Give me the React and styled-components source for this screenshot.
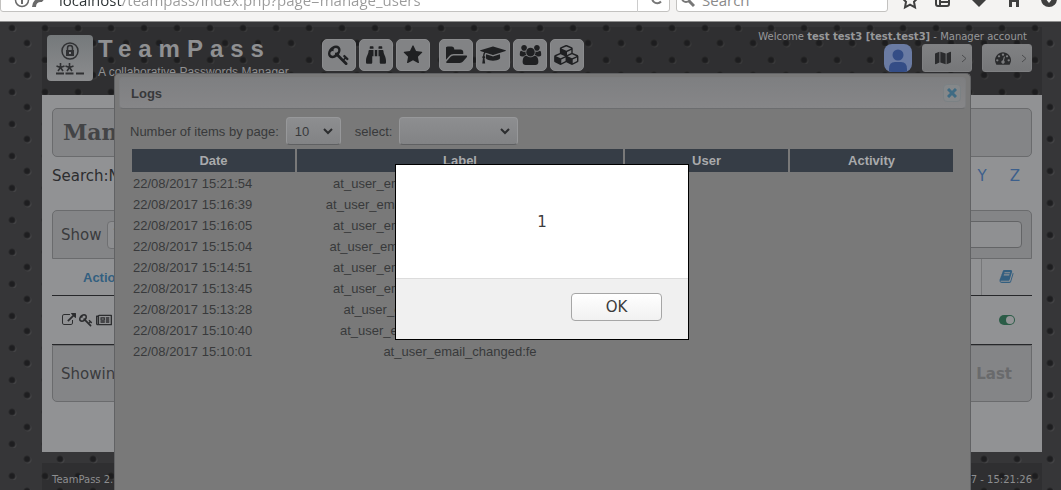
import React from "react";
import styled, { createGlobalStyle } from "styled-components";
import { FaBinoculars, FaMap, FaRegNewspaper } from "react-icons/fa";

const sans = `"Liberation Sans", Arial, sans-serif`;
const ui = `"DejaVu Sans", Verdana, sans-serif`;

const GlobalStyle = createGlobalStyle`
  *, *::before, *::after { box-sizing: border-box; }
  body {
    margin: 0;
    min-height: 100vh;
    overflow: hidden;
    background-color: #363638;
    background-image:
      radial-gradient(circle at 12px 28px, #1e1e20 2px, #29292b 3px, transparent 4px),
      radial-gradient(circle at 27px 11px, #1e1e20 2px, #29292b 3px, transparent 4px),
      radial-gradient(circle at 13px 29px, #434345 3px, transparent 4px),
      radial-gradient(circle at 28px 12px, #434345 3px, transparent 4px);
    background-size: 33px 32px;
    font-family: ${ui};
    font-size: 15px;
    color: #2c2d2f;
  }
  button, input, select { font: inherit; color: inherit; margin: 0; }
  a { text-decoration: none; color: inherit; }
`;

/* ---------- icons ---------- */

const Glyph = styled.svg`
  display: block;
  flex: none;
  fill: currentColor;
`;

const paths = {
  key: [1792, "M832 512q0-80-56-136t-136-56-136 56-56 136q0 42 19 83-41-19-83-19-80 0-136 56t-56 136 56 136 136 56 136-56 56-136q0-42-19-83 41 19 83 19 80 0 136-56t56-136zm851 704q0 17-49 66t-66 49q-9 0-28.5-16t-36.5-33-38.5-40-24.5-26l-96 96 220 220q28 28 28 68 0 42-39 81t-81 39q-40 0-68-28l-671-671q-176 131-365 131-163 0-265.5-102.5t-102.5-265.5q0-160 95-313t248-248 313-95q163 0 265.5 102.5t102.5 265.5q0 189-131 365l355 355 96-96q-3-3-26-24.5t-40-38.5-33-36.5-16-28.5q0-17 49-66t66-49q13 0 23 10 6 6 46 44.5t82 79.5 86.5 86 73 78 28.5 41z"],
  star: [1792, "M1728 647q0 22-26 48l-363 354 86 500q1 7 1 20 0 21-10.5 35.5t-30.5 14.5q-19 0-40-12l-449-236-449 236q-22 12-40 12-21 0-31.5-14.5t-10.5-35.5q0-6 2-20l86-500-364-354q-25-27-25-48 0-37 56-46l502-73 225-455q19-41 49-41t49 41l225 455 502 73q56 9 56 46z"],
  folder: [1792, "M1815 952q0 31-31 66l-336 396q-43 51-120.5 86.5t-143.5 35.5h-1088q-34 0-60.5-13t-26.5-43q0-31 31-66l336-396q43-51 120.5-86.5t143.5-35.5h1088q34 0 60.5 13t26.5 43zm-343-344v160h-832q-94 0-197 47.5t-164 119.5l-337 396-5 6q0-4-.5-12.5t-.5-12.5v-960q0-92 66-158t158-66h320q92 0 158 66t66 158v32h544q92 0 158 66t66 158z"],
  cap: [2304, "M1774 836l18 316q4 69-82 128t-235 93.5-323 34.5-323-34.5-235-93.5-82-128l18-316 574 181q22 7 48 7t48-7zm530-324q0 23-22 31l-1120 352q-4 1-10 1t-10-1l-652-206q-43 34-71 111.5t-34 178.5q63 36 63 109 0 69-58 107l58 433q2 14-8 25-9 11-24 11h-192q-15 0-24-11-10-11-8-25l58-433q-58-38-58-107 0-73 65-111 11-207 98-330l-333-104q-22-8-22-31t22-31l1120-352q4-1 10-1t10 1l1120 352q22 8 22 31z"],
  users: [2048, "M657 896q-162 5-265 128h-134q-82 0-138-40.5t-56-118.5q0-353 124-353 6 0 43.5 21t97.5 42.5 119 21.5q67 0 133-23-5 37-5 66 0 139 81 256zm1071 637q0 120-73 189.5t-194 69.5h-874q-121 0-194-69.5t-73-189.5q0-53 3.5-103.5t14-109 26.5-108.5 43-97.5 62-81 85.5-53.5 111.5-20q10 0 43 21.5t73 48 107 48 135 21.5 135-21.5 107-48 73-48 43-21.5q61 0 111.5 20t85.5 53.5 62 81 43 97.5 26.5 108.5 14 109 3.5 103.5zm-1024-1277q0 106-75 181t-181 75-181-75-75-181 75-181 181-75 181 75 75 181zm704 384q0 159-112.5 271.5t-271.5 112.5-271.5-112.5-112.5-271.5 112.5-271.5 271.5-112.5 271.5 112.5 112.5 271.5zm576 225q0 78-56 118.5t-138 40.5h-134q-103-123-265-128 81-117 81-256 0-29-5-66 66 23 133 23 59 0 119-21.5t97.5-42.5 43.5-21q124 0 124 353zm-128-609q0 106-75 181t-181 75-181-75-75-181 75-181 181-75 181 75 75 181z"],
  cubes: [2304, "M640 1632l384-192v-314l-384 164v342zm-64-454l404-173-404-173-404 173zm1088 454l384-192v-314l-384 164v342zm-64-454l404-173-404-173-404 173zm-448-293l384-165v-266l-384 164v267zm-64-379l441-189-441-189-441 189zm1088 518v416q0 36-19 67t-52 47l-448 224q-25 14-57 14t-57-14l-448-224q-4-2-7-4-2 2-7 4l-448 224q-25 14-57 14t-57-14l-448-224q-33-16-52-47t-19-67v-416q0-38 21.5-70t56.5-48l434-186v-400q0-38 21.5-70t56.5-48l448-192q23-10 50-10t50 10l448 192q35 16 56.5 48t21.5 70v400l434 186q36 16 57 48t21 70z"],
  gauge: [1792, "M384 1152q0-53-37.5-90.5t-90.5-37.5-90.5 37.5-37.5 90.5 37.5 90.5 90.5 37.5 90.5-37.5 37.5-90.5zm192-448q0-53-37.5-90.5t-90.5-37.5-90.5 37.5-37.5 90.5 37.5 90.5 90.5 37.5 90.5-37.5 37.5-90.5zm428 481l101-382q6-26-7.5-48.5t-38.5-29.5-48 6.5-30 39.5l-101 382q-60 5-107 43.5t-63 98.5q-20 77 20 146t117 89 146-20 89-117q16-60-6-117t-72-91zm660-33q0-53-37.5-90.5t-90.5-37.5-90.5 37.5-37.5 90.5 37.5 90.5 90.5 37.5 90.5-37.5 37.5-90.5zm-640-640q0-53-37.5-90.5t-90.5-37.5-90.5 37.5-37.5 90.5 37.5 90.5 90.5 37.5 90.5-37.5 37.5-90.5zm448 192q0-53-37.5-90.5t-90.5-37.5-90.5 37.5-37.5 90.5 37.5 90.5 90.5 37.5 90.5-37.5 37.5-90.5zm320 448q0 261-141 483-19 29-54 29h-1402q-35 0-54-29-141-221-141-483 0-182 71-348t191-286 286-191 348-71 348 71 286 191 191 286 71 348z"],
  external: [1792, "M1408 928v320q0 119-84.5 203.5t-203.5 84.5h-832q-119 0-203.5-84.5t-84.5-203.5v-832q0-119 84.5-203.5t203.5-84.5h704q14 0 23 9t9 23v64q0 14-9 23t-23 9h-704q-66 0-113 47t-47 113v832q0 66 47 113t113 47h832q66 0 113-47t47-113v-320q0-14 9-23t23-9h64q14 0 23 9t9 23zm384-864v512q0 26-19 45t-45 19-45-19l-176-176-652 652q-10 10-23 10t-23-10l-114-114q-10-10-10-23t10-23l652-652-176-176q-19-19-19-45t19-45 45-19h512q26 0 45 19t19 45z"],
  book: [1792, "M1703 478q40 57 18 129l-275 906q-19 64-76.5 107.5t-122.5 43.5h-923q-77 0-148.5-53.5t-99.5-131.5q-24-67-2-127 0-4 3-27t4-37q1-8-3-21.5t-3-19.5q2-11 8-21t16.5-23.5 16.5-23.5q23-38 45-91.5t30-91.5q3-10 .5-30t-.5-28q3-11 17-28t17-23q21-36 42-92t25-90q1-9-2.5-32t.5-28q4-13 22-30.5t22-22.5q19-26 42.5-84.5t27.5-96.5q1-8-3-25.5t-2-26.5q2-8 9-18t18-23 17-21q8-12 16.5-30.5t15-35 16-36 19.5-32 26.5-23.5 36-11.5 47.5 5.5l-1 3q38-9 51-9h761q74 0 114 56t18 130l-274 906q-36 119-71.5 153.5t-128.5 34.5h-869q-27 0-38 15-11 16-1 43 24 70 144 70h923q29 0 56-15.5t35-41.5l300-987q7-22 5-57 38 15 59 43zm-1064 2q-4 13 2 22.5t20 9.5h608q13 0 25.5-9.5t16.5-22.5l21-64q4-13-2-22.5t-20-9.5h-608q-13 0-25.5 9.5t-16.5 22.5zm-83 256q-4 13 2 22.5t20 9.5h608q13 0 25.5-9.5t16.5-22.5l21-64q4-13-2-22.5t-20-9.5h-608q-13 0-25.5 9.5t-16.5 22.5z"],
};

const Icon = ({ name, size }) => {
  const [width, d] = paths[name];
  return (
    <Glyph viewBox={`0 0 ${width} 1792`} height={size} width={Math.round((size * width) / 1792)} aria-hidden="true">
      <path d={d} />
    </Glyph>
  );
};

/* ---------- browser bar ---------- */

const BrowserBar = styled.div`
  display: flex;
  align-items: flex-end;
  height: 22px;
  padding-right: 1px;
  overflow: hidden;
  background: #f4f3f2;
  border-bottom: 1px solid #8e8e8e;
  font-family: "Open Sans", "Noto Sans", sans-serif;
  font-size: 15px;
  color: #555;
`;

const Field = styled.div`
  display: flex;
  align-items: center;
  flex: ${(p) => p.$grow} 1 0;
  min-width: 0;
  height: 25px;
  margin-bottom: 9px;
  margin-right: ${(p) => p.$after}px;
  padding-left: ${(p) => p.$pad}px;
  gap: 7px;
  background: #fff;
  border: 1px solid #c3c2c0;
  border-radius: 3px;
`;

const FieldInput = styled.input`
  flex: 1;
  min-width: 0;
  height: 24px;
  padding: 0;
  border: 0;
  outline: 0;
  background: transparent;
  &::placeholder { color: #8a8a8a; opacity: 1; }
`;

const AddressInput = styled(FieldInput)`
  background: linear-gradient(90deg, #2e3436 63px, #9a9a9a 63px);
  background-clip: text;
  -webkit-background-clip: text;
  -webkit-text-fill-color: transparent;
`;

const Reload = styled.button`
  width: 32px;
  height: 24px;
  padding: 0 0 0 6px;
  border: 0;
  border-left: 1px solid #ccc;
  background: none;
`;

const BrowserIcons = styled.div`
  display: flex;
  align-items: center;
  gap: 15px;
  height: 24px;
  margin-bottom: 9px;
  color: #3f3f3f;
`;

const BareButton = styled.button`
  display: block;
  width: 20px;
  height: 20px;
  padding: 0;
  border: 0;
  background: none;
`;

/* ---------- page header ---------- */

const Header = styled.header`
  display: flex;
  align-items: flex-start;
  margin: 5px 19px 0 42px;
  height: 68px;
  padding: 8px 10px 0 5px;
  background: rgba(26, 26, 28, 0.25);
`;

const Logo = styled.div`
  width: 46px;
  height: 46px;
  margin-right: 5px;
  border-radius: 4px;
  background: linear-gradient(#75797b, #8b8c8e);
`;

const Brand = styled.div`
  width: 224px;
  font-family: ${sans};
  color: #8f9092;
`;

const BrandName = styled.h1`
  margin: 0;
  font-size: 24px;
  line-height: 28px;
  font-weight: bold;
  letter-spacing: 7px;
  white-space: nowrap;
`;

const Tagline = styled.p`
  margin: 1px 0 0;
  font-size: 12px;
  line-height: 16px;
  white-space: nowrap;
`;

const MainNav = styled.nav`
  display: flex;
  gap: 9px;
  padding-top: 4px;
`;

const NavGroup = styled.div`
  display: flex;
  gap: 3px;
`;

const NavButton = styled.button`
  display: flex;
  align-items: center;
  justify-content: center;
  width: 34px;
  height: 32px;
  padding: 0;
  border: 1px solid #8b8c8e;
  border-radius: 5px;
  background: #828385;
  color: #1f2022;
`;

const Account = styled.div`
  display: flex;
  flex-direction: column;
  align-items: flex-end;
  margin-left: auto;
`;

const Welcome = styled.div`
  padding-right: 5px;
  font-size: 10px;
  line-height: 14px;
  margin-top: -5px;
  color: #97989a;
`;

const AccountRow = styled.div`
  display: flex;
  gap: 10px;
`;

const Avatar = styled.div`
  width: 28px;
  height: 28px;
  border-radius: 8px;
  overflow: hidden;
  background: #6a7ba3;
`;

const MenuButton = styled.button`
  display: flex;
  align-items: center;
  justify-content: flex-end;
  gap: 10px;
  width: 50px;
  height: 28px;
  padding: 0 4px 0 0;
  border: 1px solid #7f8082;
  border-radius: 3px;
  background: linear-gradient(#808183, #767779);
  color: #2a2b2d;
`;

/* ---------- users page ---------- */

const Panel = styled.main`
  margin: 0 19px 0 42px;
  height: 357px;
  padding: 13px 10px 0;
  background: #919294;
`;

const PageTitle = styled.h2`
  margin: 0;
  padding-left: 10px;
  height: 49px;
  font: bold 22px/46px "DejaVu Serif", serif;
  color: #434446;
  border: 1px solid #6a6b6d;
  border-radius: 5px;
  background: #848587;
`;

const Letters = styled.div`
  display: flex;
  align-items: center;
  gap: 23px;
  height: 38px;
  padding-right: 12px;
  margin-bottom: 15px;
`;

const Spacer = styled.span`
  flex: 1;
`;

const LetterLink = styled.a`
  color: #3c5f8c;
`;

const Bar = styled.div`
  display: flex;
  align-items: center;
  gap: 6px;
  height: ${(p) => p.$height}px;
  padding: ${(p) => (p.$foot ? 2 : 0)}px 9px 0 8px;
  border: 1px solid #6a6b6d;
  border-radius: ${(p) => (p.$foot ? "0 0 5px 5px" : "5px 5px 0 0")};
  background: #848587;
  color: #3a3b3d;
`;

const LengthSelect = styled.select`
  width: 60px;
  height: 28px;
  border: 1px solid #6f7072;
  border-radius: 4px;
  background: #8d8e90;
`;

const FilterInput = styled.input`
  width: 180px;
  height: 27px;
  margin-left: auto;
  border: 1px solid #636466;
  border-radius: 4px;
  background: #8f9092;
`;

const UsersTable = styled.table`
  width: 100%;
  border-collapse: collapse;
  table-layout: fixed;
  th, td { padding: 0; border-bottom: 1px solid #26272a; }
  th { height: 36px; font: bold 13px/20px ${sans}; color: #335f80; }
  th + th { border-left: 1px solid #77787a; }
  td { height: 49px; }
  th:first-child { text-align: left; padding: 2px 0 0 31px; }
  th:last-child { width: 51px; }
`;

const CellIcons = styled.div`
  display: flex;
  align-items: center;
  gap: 3px;
  padding-left: ${(p) => p.$pad}px;
`;

const Last = styled.button`
  margin-left: auto;
  padding: 0 10px 0 0;
  border: 0;
  background: none;
  font-weight: bold;
  color: #696a6c;
`;

const Footer = styled.footer`
  display: flex;
  justify-content: space-between;
  margin: 11px 19px 0 42px;
  height: 27px;
  padding: 0 10px;
  font-size: 10px;
  line-height: 34px;
  color: #8d8e90;
  background: rgba(26, 26, 28, 0.25);
`;

/* ---------- logs dialog ---------- */

const LogsLayer = styled.div`
  position: fixed;
  inset: 73px 90px 0 114px;
`;

const LogsDialog = styled.section`
  height: 100%;
  padding: 3px 4px;
  border: 1px solid #616264;
  border-bottom: 0;
  border-radius: 5px 5px 0 0;
  background: #797979;
  font-family: ${sans};
  font-size: 13px;
  color: #38393b;
  overflow: hidden;
`;

const DialogTitle = styled.header`
  display: flex;
  align-items: center;
  justify-content: space-between;
  height: 32px;
  padding: 0 4px 0 11px;
  border: 1px solid #7d7e80;
  border-bottom-color: #6c6d6f;
  border-radius: 4px;
  background: linear-gradient(#7e7f81, #868688);
  font-weight: bold;
`;

const CloseButton = styled.button`
  display: flex;
  align-items: center;
  justify-content: center;
  width: 18px;
  height: 18px;
  padding: 0;
  border: 1px solid #7b8184;
  border-radius: 4px;
  background: #85888a;
  color: #3f6b83;
`;

const Filters = styled.div`
  display: flex;
  align-items: center;
  gap: 7px;
  padding: 8px 11px 0;
`;

const FilterSelect = styled.select`
  appearance: none;
  display: block;
  width: ${(p) => p.$width}px;
  height: 28px;
  padding: 0 8px;
  border: 1px solid #97989a;
  border-bottom-color: #5f6062;
  border-radius: 4px;
  background: linear-gradient(#8d8e90, #828385);
`;

const SelectBox = styled.span`
  position: relative;
  margin-right: 7px;
  svg {
    position: absolute;
    right: 8px;
    top: 50%;
    margin-top: -4px;
    pointer-events: none;
  }
`;

const LogTable = styled.table`
  width: calc(100% - 22px);
  margin: 3px 11px 0;
  border-spacing: 2px 1px;
  table-layout: fixed;
  th {
    height: 23px;
    padding: 0;
    background: #363d46;
    color: #a9aaac;
  }
  td {
    height: 20px;
    padding: 2px 1px 0;
    line-height: 16px;
    text-align: center;
    white-space: nowrap;
  }
  td:first-child { text-align: left; }
`;

/* ---------- alert ---------- */

const AlertLayer = styled.div`
  position: fixed;
  inset: 164px 19px auto 42px;
  display: flex;
  justify-content: center;
`;

const Alert = styled.div`
  width: 294px;
  border: 1px solid #000;
  background: #fff;
  color: #3c3c3c;
`;

const AlertText = styled.p`
  margin: 0;
  padding-top: 1px;
  line-height: 112px;
  text-align: center;
`;

const AlertActions = styled.div`
  display: flex;
  justify-content: flex-end;
  padding: 14px 26px 18px;
  border-top: 1px solid #dcdcdc;
  background: #f0f0f0;
`;

const OkButton = styled.button`
  width: 91px;
  height: 28px;
  padding: 0;
  border: 1px solid #a6a6a6;
  border-radius: 4px;
  background: linear-gradient(#fff, #f1f1f1);
`;

const Chevron = () => (
  <svg width="10" height="8" viewBox="0 0 10 8" fill="none" stroke="#2c2d2f" strokeWidth="2" aria-hidden="true">
    <path d="M1 2l4 4 4-4" />
  </svg>
);

const Arrow = () => (
  <svg width="6" height="9" viewBox="0 0 6 9" fill="none" stroke="#4c4d4f" aria-hidden="true">
    <path d="M1 1l4 3.500-4 3.500" />
  </svg>
);

const logs = [
  ["22/08/2017 15:21:54", "at_user_email_changed:test@example.com"],
  ["22/08/2017 15:16:39", "at_user_email_changed:test33@example.com"],
  ["22/08/2017 15:16:05", "at_user_email_changed:test@example.com"],
  ["22/08/2017 15:15:04", "at_user_email_changed:test3@example.com"],
  ["22/08/2017 15:14:51", "at_user_email_changed:test@example.com"],
  ["22/08/2017 15:13:45", "at_user_email_changed:test@example.com"],
  ["22/08/2017 15:13:28", "at_user_email_changed:test3@test.com"],
  ["22/08/2017 15:10:40", "at_user_email_changed:test33@test.com"],
  ["22/08/2017 15:10:01", "at_user_email_changed:fe"],
];

export default function App() {
  return (
    <>
      <GlobalStyle />
      <BrowserBar>
        <Field $grow={671} $after={6} $pad={13}>
          <svg width="38" height="20" viewBox="0 0 38 20" fill="none" stroke="#6a6a6a" aria-hidden="true">
            <circle cx="8" cy="10" r="6.500" strokeWidth="1.500" />
            <path d="M8 9v5M8 6v2" strokeWidth="2" />
            <path d="M20 17c0-4 3-7 7-7l8-9" strokeWidth="4" />
          </svg>
          <AddressInput aria-label="Address" defaultValue="localhost/teampass/index.php?page=manage_users" />
          <Reload aria-label="Reload">
            <svg width="14" height="20" viewBox="0 0 14 20" fill="none" stroke="#777" strokeWidth="2" aria-hidden="true">
              <path d="M11 13.500A5 5 0 1 1 11 7" />
            </svg>
          </Reload>
        </Field>
        <Field as="label" $grow={211} $after={12} $pad={4}>
          <svg width="14" height="16" viewBox="0 0 14 16" fill="none" stroke="#777" strokeWidth="2" aria-hidden="true">
            <circle cx="5" cy="6" r="4" />
            <path d="M8 9l5 5" strokeWidth="3" />
          </svg>
          <FieldInput aria-label="Search" placeholder="Search" />
        </Field>
        <BrowserIcons>
          <BareButton aria-label="Bookmark">
            <svg width="20" height="20" viewBox="0 0 20 20" fill="none" stroke="currentColor" strokeWidth="2">
              <path d="M10 2l2.500 5 5.500.8-4 4 1 5.500-5-2.700-5 2.700 1-5.500-4-4L7.500 7z" />
            </svg>
          </BareButton>
          <BareButton aria-label="Library">
            <svg width="20" height="20" viewBox="0 0 20 20" fill="none" stroke="currentColor" strokeWidth="2">
              <rect x="1" y="2" width="13" height="14" rx="2" />
              <path d="M5 2v14M5 7h9M5 12h9" />
            </svg>
          </BareButton>
          <BareButton aria-label="Pocket">
            <svg width="20" height="20" viewBox="0 0 20 20" fill="currentColor">
              <path d="M1 2h16v7l-8 8-8-8z" />
            </svg>
          </BareButton>
          <BareButton aria-label="Home">
            <svg width="20" height="20" viewBox="0 0 20 20" fill="currentColor">
              <path d="M9 1l8 8h-3v8h-3v-5H7v5H4V9H1z" />
            </svg>
          </BareButton>
          <BareButton aria-label="Downloads">
            <svg width="20" height="20" viewBox="0 0 20 20">
              <circle cx="9" cy="9" r="8" fill="currentColor" />
              <path d="M5 8h8l-4 5z" fill="#f4f3f2" />
            </svg>
          </BareButton>
        </BrowserIcons>
      </BrowserBar>

      <Header>
        <Logo>
          <svg width="46" height="46" viewBox="0 0 46 46" fill="none" stroke="#303133" strokeWidth="2" aria-hidden="true">
            <circle cx="23" cy="16" r="8" strokeWidth="1.500" />
            <rect x="19" y="15" width="8" height="6" fill="#303133" stroke="none" />
            <path d="M20.500 15v-2a2.500 2.500 0 0 1 5 0v2" strokeWidth="1.500" />
            <path d="M22 18h2" stroke="#85868a" />
            <path d="M13.500 28v4.500M13.500 32.500l-4-1.500M13.500 32.500l4-1.500M13.500 32.500l-2.500 3.500M13.500 32.500l2.500 3.500M22.500 28v4.500M22.500 32.500l-4-1.500M22.500 32.500l4-1.500M22.500 32.500l-2.500 3.500M22.500 32.500l2.500 3.500" strokeWidth="1.600" />
            <path d="M9 38.500h8M18.500 38.500h8M29 38.500h8" />
          </svg>
        </Logo>
        <Brand>
          <BrandName>TeamPass</BrandName>
          <Tagline>A collaborative Passwords Manager</Tagline>
        </Brand>
        <MainNav>
          <NavGroup>
            <NavButton aria-label="Items"><Icon name="key" size={22} /></NavButton>
            <NavButton aria-label="Find"><FaBinoculars size={20} /></NavButton>
            <NavButton aria-label="Favourites"><Icon name="star" size={20} /></NavButton>
          </NavGroup>
          <NavGroup>
            <NavButton aria-label="Folders"><Icon name="folder" size={21} /></NavButton>
            <NavButton aria-label="Roles"><Icon name="cap" size={20} /></NavButton>
            <NavButton aria-label="Users"><Icon name="users" size={20} /></NavButton>
            <NavButton aria-label="Views"><Icon name="cubes" size={20} /></NavButton>
          </NavGroup>
        </MainNav>
        <Account>
          <Welcome>Welcome <b>test test3 [test.test3]</b> - Manager account</Welcome>
          <AccountRow>
            <Avatar>
              <svg width="28" height="28" viewBox="0 0 28 28" fill="#344d86" aria-hidden="true">
                <circle cx="14" cy="11" r="5.500" />
                <path d="M5 28v-3q0-7 6-7h6q6 0 6 7v3z" />
              </svg>
            </Avatar>
            <MenuButton aria-label="Map menu"><FaMap size={16} /><Arrow /></MenuButton>
            <MenuButton aria-label="Dashboard menu"><Icon name="gauge" size={16} /><Arrow /></MenuButton>
          </AccountRow>
        </Account>
      </Header>

      <Panel>
        <PageTitle>Manage users</PageTitle>
        <Letters>
          <span>Search:N</span>
          <Spacer />
          <LetterLink href="#y">Y</LetterLink>
          <LetterLink href="#z">Z</LetterLink>
        </Letters>
        <Bar $height={49}>
          <label htmlFor="length">Show</label>
          <LengthSelect id="length"><option>10</option></LengthSelect>
          <FilterInput aria-label="Filter users" />
        </Bar>
        <UsersTable>
          <thead>
            <tr>
              <th>Actions</th>
              <th aria-label="Logs"><CellIcons $pad={17}><Icon name="book" size={15} /></CellIcons></th>
            </tr>
          </thead>
          <tbody>
            <tr>
              <td>
                <CellIcons $pad={10}>
                  <Icon name="external" size={14} />
                  <Icon name="key" size={14} />
                  <FaRegNewspaper size={16} />
                </CellIcons>
              </td>
              <td>
                <CellIcons $pad={18}>
                  <svg width="16" height="10" viewBox="0 0 16 10" aria-hidden="true">
                    <rect width="16" height="10" rx="5" fill="#2b5c47" />
                    <circle cx="11" cy="5" r="4" fill="#939496" />
                  </svg>
                </CellIcons>
              </td>
            </tr>
          </tbody>
        </UsersTable>
        <Bar $height={57} $foot>
          <span>Showing</span>
          <Last>Last</Last>
        </Bar>
      </Panel>

      <Footer>
        <span>TeamPass 2.1.27</span>
        <span>22/08/2017 - 15:21:26</span>
      </Footer>

      <LogsLayer>
        <LogsDialog role="dialog" aria-label="Logs">
          <DialogTitle>
            <span>Logs</span>
            <CloseButton aria-label="Close">
              <svg width="10" height="10" viewBox="0 0 10 10" stroke="currentColor" strokeWidth="3" aria-hidden="true">
                <path d="M1 1l8 8M9 1l-8 8" />
              </svg>
            </CloseButton>
          </DialogTitle>
          <Filters>
            <label htmlFor="perPage">Number of items by page:</label>
            <SelectBox>
              <FilterSelect id="perPage" $width={55}><option>10</option></FilterSelect>
              <Chevron />
            </SelectBox>
            <label htmlFor="kind">select:</label>
            <SelectBox>
              <FilterSelect id="kind" $width={119}><option></option></FilterSelect>
              <Chevron />
            </SelectBox>
          </Filters>
          <LogTable>
            <colgroup>
              <col width="20%" />
              <col width="40%" />
              <col width="20%" />
              <col width="20%" />
            </colgroup>
            <thead>
              <tr><th>Date</th><th>Label</th><th>User</th><th>Activity</th></tr>
            </thead>
            <tbody>
              {logs.map(([date, label]) => (
                <tr key={date}><td>{date}</td><td>{label}</td><td></td><td></td></tr>
              ))}
            </tbody>
          </LogTable>
        </LogsDialog>
      </LogsLayer>

      <AlertLayer>
        <Alert role="alertdialog" aria-label="Message">
          <AlertText>1</AlertText>
          <AlertActions><OkButton>OK</OkButton></AlertActions>
        </Alert>
      </AlertLayer>
    </>
  );
}
